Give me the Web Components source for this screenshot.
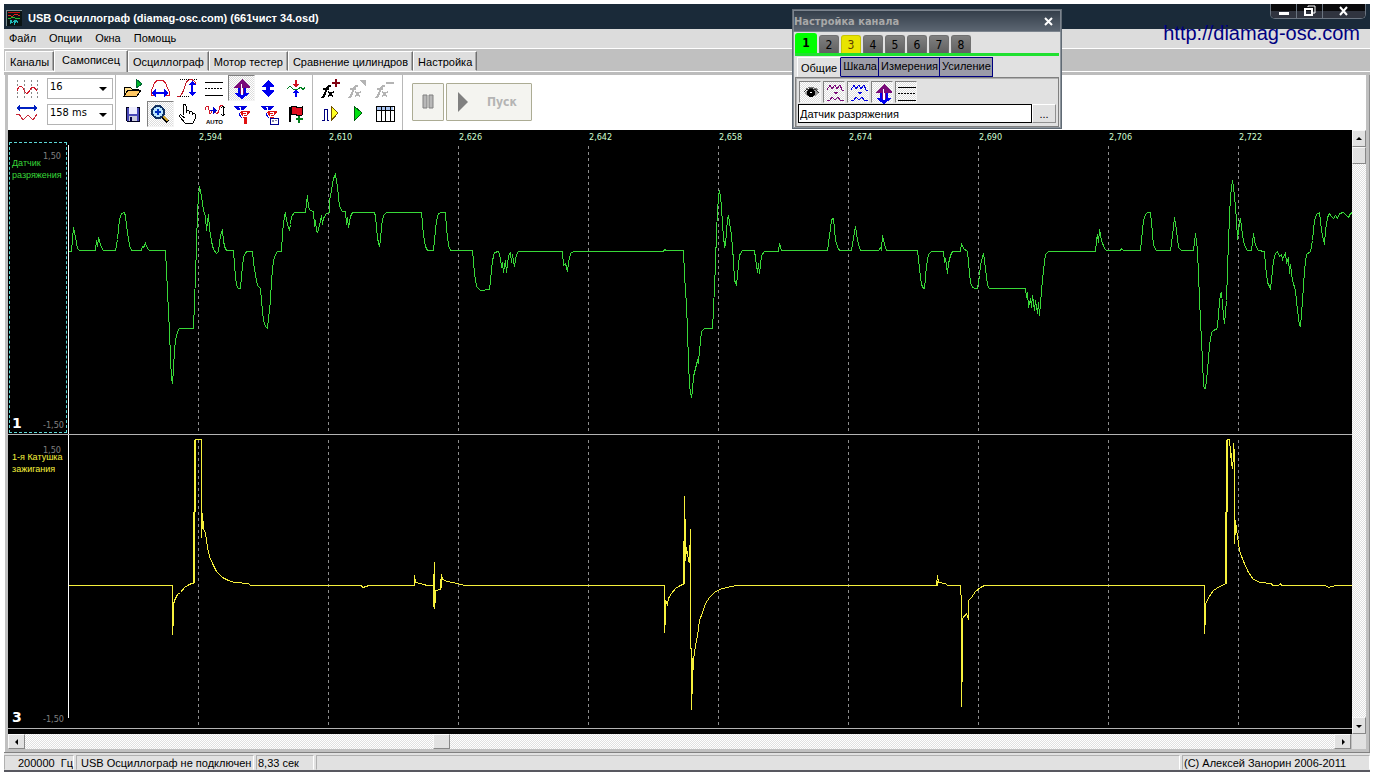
<!DOCTYPE html>
<html lang="ru">
<head>
<meta charset="utf-8">
<title>USB Осциллограф</title>
<style>
  html, body { margin: 0; background: #fff; }
  body { font: 11px/14px "Liberation Sans", Arial, sans-serif; color: #000; }
</style>
</head>
<body>
<osc-app></osc-app>
<script>
const define = (name, render, after) => customElements.define(name, class extends HTMLElement {
  connectedCallback() {
    if (this.shadowRoot) return;
    const root = this.attachShadow({ mode: 'open' });
    const t = document.createElement('template');
    t.innerHTML = '<style>*{box-sizing:border-box}button,input,select{font:inherit;color:inherit;margin:0;padding:0;border:0;border-radius:0}:host{box-sizing:border-box}</style>' + render(this);
    root.append(t.content.cloneNode(true));
    if (after) after(this, root);
  }
});

/* Icons, drawn on a 27 x 26 cell. */
const FX = (c) => `<g stroke="${c}" fill="none" stroke-width="2"><path d="M14 11c-2-1-3 0-4 2l-3 8c0 1-1 2-2 1M6 14h6"/><path stroke-width="1.6" d="M11 17c3-1 2 5 5 4M17 17c-2-1-4 5-6 4"/></g>`;
const ARROWS = `<path fill="#7a0a7a" d="M14 4l8 8v1h-5v6h-2v-6h-2v6h-2v-6H6v-1z"/><path fill="#fff" d="M13 9h1v9h-1z"/><path fill="#0000f0" d="M10 13h2v6h4v-6h2v5h3v1l-7 5-7-5v-1h3z"/><path fill="#fff" d="M13 13h2v7h-2z"/><path fill="#7a0a7a" d="M12 12h1v5h-1zM15 12h1v5h-1z"/>`;
const FILTERS = `<path fill="#0000e0" d="M5 5h14l-5 6v6l-3-2v-4z"/><path fill="#e01010" stroke="#fff" d="M10 9h14l-5 7v7h-4v-6z"/><g fill="#fff"><path d="M11 6h2v5h-1V7h-1z"/><path d="M15 11h4v3h-3v1h3v1h-4v-3h3v-1h-3z"/></g>`;
const ICONS = {
  open: '<path d="M16 4v9l6-4z" fill="#00b828" stroke="#063"/><path d="M4 21V12h6l2 2h6v3" fill="#ffe08c" stroke="#000"/><path d="M4 21l4-6h13l-4 6z" fill="#ffc864" stroke="#000"/>',
  save: '<path d="M6 6h13v14H7l-1-1z" fill="#4a4ab8" stroke="#000020"/><path d="M9 6h8v7H9z" fill="#eef"/><path d="M9 15h8v5H9z" fill="#ccd"/><path d="M10 16h2v4h-2z" fill="#004"/>',
  dome: '<path d="M7 20H4v-4c1-2 1-3 2-4 1-5 4-7 7-7s6 2 7 7c1 1 1 2 2 4v4h-3" fill="none" stroke="#d01828"/><path d="M4 18l5-4v3h8v-3l5 4-5 4v-3H9v3z" fill="#0000f0"/>',
  range: '<path d="M6 4h17M6 21h10" stroke="#000" stroke-dasharray="1 1"/><path d="M3 21h3c5-3 4-15 9-16 4-1 6 1 7 4" fill="none" stroke="#c01828"/><path d="M18 6l4 4h-3v7h3l-4 4-4-4h3v-7h-3z" fill="#0000f0"/>',
  lines: '<path d="M4 7h18M4 20h18" stroke="#000"/><path d="M4 13h18" stroke="#000" stroke-dasharray="2 1"/>',
  both: ARROWS,
  updown: '<path d="M13 5l6 6v1h-4v3h4v1l-6 6-6-6v-1h4v-3H7v-1z" fill="#0000f0"/>',
  cross: '<path d="M5 14l3-3 3 3h5l3-2 2 3 2-3" fill="none" stroke="#008020"/><path d="M14 5v6" stroke="#d01020" stroke-width="2"/><path d="M10 9h7l-3 4z" fill="#d01020"/><path d="M10 18h7l-3-4z" fill="#0000f0"/><path d="M14 16v6" stroke="#0000f0" stroke-width="2"/>',
  zoom: '<path d="M15 15l6 6" stroke="#000" stroke-width="4"/><path d="M16 15l5 5" stroke="#c8a030" stroke-width="2"/><circle cx="11" cy="11" r="6" fill="#b8e4ff" stroke="#103060" stroke-width="2"/><path d="M8 11h6M11 8v6" stroke="#0030c0" stroke-width="2"/>',
  hand: '<path d="M9 14V5c1-2 2-2 3 0v7-2c1-1 3-1 3 0v3-2c1-1 3-1 3 0v3-1c1-1 3-1 3 0v5l-2 4h-8l-5-6c-1-2 1-3 2-1l3 2" fill="#fff" stroke="#000"/>',
  auto: '<path d="M4 9c1-5 4-5 4 0s2 4 3 1M14 9c1 5 3 4 4 0s1-5 4-5" fill="none" stroke="#d01828"/><path d="M9 9h3V6l4 3-4 4v-3H9z" fill="#0000d0"/><path d="M22 5v10M20 7l2-2 2 2M20 13l2 2 2-2" fill="none" stroke="#000"/><text x="5" y="23" font-size="6" font-weight="bold">AUTO</text>',
  filter: FILTERS,
  filterbox: FILTERS + '<path d="M15 17h8v6h-8z" fill="#fff" stroke="#000090"/><path d="M17 19h2v2h-2zM20 19h2v1h-2z" fill="#88a"/>',
  flag: '<path d="M8 6v15" stroke="#000" stroke-width="2"/><path d="M9 6l4-1 3 2 4-1v8l-4 1-3-2-4 1z" fill="#e01020" stroke="#000"/><path d="M17 15v7M14 18h7" stroke="#00801c" stroke-width="2"/>',
  fxadd: FX('#000') + '<path d="M19 4v8M15 8h8" stroke="#800010" stroke-width="2"/>',
  fxedit: FX('#b4b4b4') + '<path d="M15 5h7v7z" fill="#b4b4b4"/>',
  fxdel: FX('#b4b4b4') + '<path d="M15 8h8" stroke="#b4b4b4" stroke-width="2"/>',
  step: '<path d="M5 19h2V8h3v11h2" fill="none" stroke="#000080"/><path d="M14 5v15l7-8z" fill="#ffff20" stroke="#705000"/>',
  run: '<path d="M10 5v15l8-8z" fill="#00e010" stroke="#005c10"/>',
  table: '<path d="M5 5h18v15H5z" fill="#fff" stroke="#000"/><path d="M6 6h16v3H6z" fill="#a8c4f0"/><path d="M5 9h18M10 5v15M14 5v15M19 5v15" stroke="#000"/>',
  eye: '<path d="M6 13c3-5 11-6 15 0-3 5-11 5-15 0z" fill="#999"/><path d="M6 12c3-4 11-5 15 1" fill="none" stroke="#333"/><circle cx="13" cy="13" r="4" fill="#000"/><path d="M8 9c3-2 9-2 12 1" fill="none" stroke="#777"/><path d="M12 12h2" stroke="#fff"/>',
  wavesp: '<g fill="none" stroke="#7a0a7a"><path d="M5 10l3-5 2 4 3-4 2 4 3-4 2 5h2M5 20h3l2-3 3 3 3-3 2 3h4"/></g><path d="M11 12h5l-2 3z" fill="#7a0a7a"/>',
  wavesb: '<g fill="none" stroke="#0000e0"><path d="M5 10l3-5 2 4 3-4 2 4 3-4 2 5h2M5 20h3l2-3 3 3 3-3 2 3h4"/></g><path d="M11 12h5l-2 3z" fill="#0000e0"/>',
  grid: '<path d="M3 5h1v2h-1zM3 9h1v2h-1zM3 13h1v2h-1zM3 17h1v2h-1zM3 21h1v2h-1z" fill="#888"/><path d="M10 5v18M17 5v18M23 5v18" stroke="#888" stroke-dasharray="2 2"/><path d="M3 16c2-6 5-6 7-1s4 4 6 0 4-4 7 1" fill="none" stroke="#d01828"/>',
  span: '<path d="M2 7l4-3v2h14V4l4 3-4 3V8H6v2z" fill="#0020c0"/><path d="M2 13h3l4 6 5-5 5 5 4-6" fill="none" stroke="#c82838"/>'
};

define('osc-icon', el => `<style>
  :host{display:block;width:27px;height:26px;font-family:"Liberation Sans",sans-serif}
  svg{display:block}
</style><svg width="27" height="26" viewBox="0 0 27 26" aria-hidden="true" shape-rendering="crispEdges">${ICONS[el.getAttribute('name')]}</svg>`);

define('icon-button', el => `<style>
  :host{display:block}
  button{display:grid;place-items:center;width:27px;height:26px;background:none;border:1px solid transparent}
  :host([pressed]) button{background:repeating-conic-gradient(#dcdcdc 0 25%,#fff 0 50%) 0 0/2px 2px;border-color:#808080 #f4f4f4 #f4f4f4 #808080}
  :host([small]) button{width:22px;height:22px}
  osc-icon{margin:-2px}
</style><button type="button" aria-label="${el.getAttribute('label')}"><osc-icon name="${el.getAttribute('name')}"></osc-icon></button>`);

define('title-bar', () => `<style>
  :host{display:flex;height:25px;background:#1a2a39;color:#fff;font-weight:bold;padding-left:2px;gap:6px;align-items:center}
  h1{font:inherit;margin:0;flex:1;padding-top:3px;white-space:nowrap}
  .logo{margin-top:2px}
  .win{display:flex;align-self:flex-start;margin-right:4px;border:1px solid #6a7480;border-top:0;border-radius:0 0 5px 5px;background:#0c0f14}
  .win button{height:14px;width:26px;background:linear-gradient(#0a0a0c 50%,#30343f 50%);border-right:1px solid #6a7480;display:grid;place-items:center}
  .win button:first-child{border-bottom-left-radius:4px}
  .win button:last-child{width:42px;border-right:0;border-bottom-right-radius:4px}
  svg{display:block}
</style>
<svg class="logo" width="16" height="16" viewBox="0 0 16 16" shape-rendering="crispEdges" aria-hidden="true"><path d="M0 0h16v16H0z" fill="#0a1414" stroke="#7a8c90"/><path d="M2 3l3-1 3 1 6-1" stroke="#c01010" fill="none"/><path d="M2 6c2-3 3 2 5 0s3-2 7 0" stroke="#e02020" fill="none"/><path d="M2 8h3l2-1 2 1h5" stroke="#20c030" fill="none"/><path d="M4 14l1-4 1 3 2-2v4l2-5 2 3" stroke="#20b8b8" fill="none"/></svg>
<h1>USB Осциллограф (diamag-osc.com) (661чист 34.osd)</h1>
<div class="win">
 <button type="button" aria-label="Свернуть"><svg width="12" height="12" viewBox="0 0 12 12"><path d="M1 7h10v3H1z" fill="#fff"/></svg></button>
 <button type="button" aria-label="Восстановить"><svg width="12" height="12" viewBox="0 0 12 12" fill="none" stroke="#fff"><path d="M4 2V1h7v7H9"/><path stroke-width="2" d="M1 4h7v6H1z"/></svg></button>
 <button type="button" aria-label="Закрыть"><svg width="12" height="12" viewBox="0 0 12 12" stroke="#fff" stroke-width="2"><path d="M2 2l7 8M9 2l-7 8"/></svg></button>
</div>`);

define('menu-bar', () => `<style>
  :host{display:block;background:#dcdcdc;height:20px;border-bottom:1px solid #fff}
  nav{display:flex;gap:13px;padding:2px 0 0 5px}
  a{color:#000;text-decoration:none;line-height:15px}
</style><nav><a href="#file">Файл</a><a href="#options">Опции</a><a href="#windows">Окна</a><a href="#help">Помощь</a></nav>`);

define('tab-strip', el => `<style>
  :host{display:flex;background:#c0c0c0;height:26px;padding:1px 0 0 1px;border-bottom:3px solid #bcbcbc;position:relative}
  :host::after{content:"";position:absolute;left:0;right:0;bottom:0;height:1px;background:#fff}
  button{background:#dedede;border:1px solid;border-color:#fff #707070 transparent #fff;box-shadow:inset -1px 0 #a8a8a8;padding:2px 4px 0;margin-top:1px;height:20px;white-space:nowrap}
  button[aria-selected=true]{margin:0;height:22px;padding:0 7px 3px;z-index:1;border-bottom:0;background:#e2e2e2}
</style>${el.getAttribute('tabs').split('|').map((t, i) => `<button role="tab" type="button" aria-selected="${i === 1}">${t}</button>`).join('')}`);

define('combo-box', el => `<style>
  :host{display:block;position:relative;width:66px;height:21px}
  select{appearance:none;width:100%;height:100%;background:#fff;border:1px solid #b4b4b4;padding:0 18px 2px 2px;font-family:"DejaVu Sans Condensed",sans-serif}
  :host::after{content:"";position:absolute;right:6px;top:9px;border:4px solid transparent;border-top-color:#000;border-bottom:0;pointer-events:none}
</style><select aria-label="${el.getAttribute('label')}"><option>${el.getAttribute('value')}</option></select>`);

define('tool-bar', () => `<style>
  :host{display:flex;background:#fff;height:55px}
  .g{display:grid;grid-auto-rows:26px;border-right:1px solid #b8b8b8;align-content:start}
  .scale{grid-template-columns:33px 66px;width:108px;padding-left:6px;align-items:center}
  .tools{grid-template-columns:repeat(7,27px);width:197px;padding-left:4px}
  .calc{grid-template-columns:repeat(3,27px);width:90px;padding-left:4px}
  .run{display:flex;gap:2px;padding:8px 0 0 9px}
  .run button{height:38px;border:1px solid #acac94;border-radius:1px;background:#f4f4f0;color:#b4b4b4;display:flex;align-items:center}
  .pause{width:32px;justify-content:center}
  .run .start{width:86px;padding-left:10px;gap:18px;font:bold 12px/16px "DejaVu Sans Condensed",sans-serif}
  svg{display:block}
</style>
<div class="g scale"><osc-icon name="grid"></osc-icon><combo-box label="Чувствительность" value="16"></combo-box><osc-icon name="span"></osc-icon><combo-box label="Развёртка" value="158 ms"></combo-box></div>
<div class="g tools">
${[['open','Открыть'],['dome','Ширина'],['range','Размах'],['lines','Линии'],['both','Смещение',1],['updown','Масштаб'],['cross','Уровень'],['save','Сохранить'],['zoom','Лупа',1],['hand','Прокрутка'],['auto','Авто'],['filter','Фильтр'],['filterbox','Параметры фильтра'],['flag','Метка']].map(([n,l,p]) => `<icon-button name="${n}" label="${l}"${p ? ' pressed' : ''}></icon-button>`).join('')}
</div>
<div class="g calc">
${[['fxadd','Добавить функцию'],['fxedit','Изменить функцию'],['fxdel','Удалить функцию'],['step','Шаг'],['run','Запуск'],['table','Таблица']].map(([n,l]) => `<icon-button name="${n}" label="${l}"></icon-button>`).join('')}
</div>
<div class="run">
 <button class="pause" type="button" disabled aria-label="Пауза"><svg width="12" height="16" viewBox="0 0 12 16"><path d="M1 1h4v13H1zM7 1h4v13H7z" fill="#b8b8b8" stroke="#808080"/></svg></button>
 <button class="start" type="button" disabled><svg width="12" height="20" viewBox="0 0 12 20"><path d="M1 0v20l10-10z" fill="#808080"/></svg><span>Пуск</span></button>
</div>`);

define('scroll-bar', el => {
  const v = el.hasAttribute('vertical');
  const arrow = d => `<svg width="8" height="8" viewBox="0 0 8 8" aria-hidden="true"><path d="${d}"/></svg>`;
  return `<style>
  :host{display:flex;background:repeating-conic-gradient(#e0e0e0 0 25%,#fff 0 50%) 0 0/2px 2px}
  :host([vertical]){flex-direction:column}
  button,i{flex:none;display:grid;place-items:center;width:${v ? 14 : 17}px;height:${v ? 17 : 15}px;background:#e1e1e1;border:1px solid;border-color:#f8f8f8 #888 #888 #f8f8f8}
  span{flex:${el.getAttribute('before')} 1 0px}
  span:last-of-type{flex-grow:${el.getAttribute('after')}}
  svg{display:block}
</style><button type="button" aria-label="Назад">${arrow(v ? 'M1 5h6L4 2z' : 'M5 1v6L2 4z')}</button><span></span><i></i><span></span><button type="button" aria-label="Вперёд">${arrow(v ? 'M1 3h6L4 6z' : 'M3 1v6l3-3z')}</button>`;
});

/* Polyline lists are kept in chart units: one unit per screen pixel of the recording. */
const GREEN = '68,251 71,251 73,227 75,237 77,248 79,250 95,250 96,240 97,246 98,237 99,241 101,247 103,250 115,250 117,239 119,219 121,213 124,212 125,216 127,232 129,245 131,250 141,250 142,246 143,247 145,243 147,248 149,250 165,250 166,270 167,291 168,312 169,330 170,358 171,378 172,383 173,368 174,350 175,340 177,331 179,328 193,328 194,302 195,275 196,246 197,210 199,186 201,196 203,210 205,216 206,230 207,222 208,214 209,228 211,241 213,249 216,253 218,251 220,235 222,229 223,241 225,249 227,250 233,250 234,265 236,285 238,288 240,288 241,275 243,257 245,252 247,251 252,251 253,262 255,275 257,285 260,288 261,300 263,320 265,326 267,328 268,318 270,300 271,280 273,260 275,254 277,251 281,251 282,232 284,215 285,213 286,220 289,230 290,224 291,216 294,212 305,212 306,203 307,195 308,207 310,210 313,211 314,226 315,220 316,231 317,232 319,225 321,215 322,224 323,218 326,213 329,212 329,200 331,190 333,178 335,174 337,186 339,206 342,211 345,211 346,224 347,217 348,227 350,216 352,212 374,212 375,216 377,238 379,246 380,240 381,225 383,215 386,212 421,212 423,235 425,246 427,250 433,250 434,240 436,220 438,213 441,212 445,212 446,228 448,245 450,250 472,250 474,273 476,286 480,290 489,289 490,280 492,260 494,252 498,251 500,258 501,267 502,262 503,272 505,260 506,272 508,255 510,252 511,262 512,254 514,266 516,254 518,251 562,251 563,265 565,263 567,271 568,262 570,253 573,251 663,251 664,249 666,250 683,250 684,275 686,305 687,330 688,362 689,385 691,397 692,390 693,376 695,368 697,360 698,362 699,350 701,331 704,328 712,328 713,310 714,285 715,265 716,230 718,195 719,190 721,205 722,225 724,246 725,244 727,218 728,215 731,235 733,260 734,280 736,284 737,275 739,255 742,250 754,250 755,258 757,272 758,263 759,273 761,255 764,251 778,251 779,243 781,250 783,250 827,250 829,235 831,220 832,218 833,218 835,240 838,249 840,250 851,250 853,238 855,226 857,240 860,250 878,250 880,247 881,249 882,235 884,244 886,250 888,250 917,250 919,268 921,284 923,288 924,288 926,265 928,254 931,251 943,251 944,262 945,258 947,273 948,263 950,255 952,251 960,251 961,243 963,248 967,251 968,262 970,282 972,287 975,288 977,288 979,275 980,265 982,256 983,253 985,268 987,285 989,288 1025,288 1026,297 1027,292 1028,307 1030,298 1031,307 1032,295 1034,310 1035,300 1037,313 1038,302 1039,315 1041,290 1043,270 1045,254 1048,251 1095,251 1096,240 1097,234 1098,242 1099,229 1101,240 1104,248 1106,250 1120,250 1121,248 1123,250 1140,250 1141,240 1143,220 1145,214 1147,212 1150,212 1151,222 1153,245 1156,250 1170,250 1172,235 1174,217 1176,230 1178,247 1181,250 1193,250 1195,233 1197,250 1198,275 1200,320 1202,360 1203,385 1204,388 1205,388 1207,370 1209,345 1211,332 1213,330 1217,328 1218,312 1220,293 1221,292 1223,315 1224,323 1226,300 1228,240 1230,195 1232,180 1234,195 1236,220 1237,239 1239,222 1240,218 1242,235 1244,245 1247,250 1251,250 1253,233 1255,245 1258,250 1264,251 1265,265 1267,282 1270,288 1271,280 1273,260 1275,253 1277,251 1279,256 1281,254 1282,259 1285,252 1286,262 1288,258 1289,273 1290,264 1292,280 1295,290 1297,310 1299,325 1300,326 1302,300 1304,270 1306,254 1310,251 1312,240 1314,220 1316,214 1319,212 1321,230 1324,244 1325,230 1327,217 1329,213 1331,216 1333,218 1335,215 1337,218 1339,213 1343,212 1346,215 1348,217 1350,213 1352,212';
const YELLOW = '68,585 172,585 172,634 173,618 173,604 174,600 177,594 180,592 184,587 187,585 191,583 194,582 194,511 195,511 195,439 201,439 201,537 202,513 203,528 205,533 207,547 209,556 212,563 216,571 222,577 228,580 234,582 248,583 250,585 361,585 362,587 366,586 368,585 414,585 414,575 415,582 424,584 426,585 433,585 434,562 434,608 435,597 435,590 440,589 441,585 441,574 442,579 447,581 457,583 464,585 664,585 664,632 665,618 665,600 667,604 668,598 671,593 675,588 680,585 684,583 684,540 684,496 685,540 685,558 686,547 688,560 689,562 690,529 690,648 691,648 691,709 692,680 693,659 695,645 697,635 699,620 702,612 705,603 709,597 714,592 719,589 726,587 736,585 936,585 937,575 938,582 945,583 947,585 960,585 961,603 961,706 962,660 962,618 966,613 968,619 968,600 971,597 975,591 980,587 984,585 1204,585 1204,633 1205,617 1205,604 1208,597 1213,590 1219,586 1226,583 1226,511 1227,511 1227,439 1229,439 1230,452 1231,463 1232,468 1233,455 1233,443 1234,453 1234,543 1235,520 1237,536 1239,550 1243,561 1248,572 1253,579 1260,582 1271,583 1272,585 1278,585 1280,583 1281,585 1325,585 1328,587 1335,585 1352,585';
const YELLOW_HEAVY = 'M193 583V511M194 511V439M172 618V604M202 513V528M683 583V540M685 538V560M686 547V553M692 657V682M937 580V585M962 618V660M968 600V614M1225 583V511M1226 511V439M1204 604V618M1235 520V534M1231 452V463M433 585V606M435 590V597M440 578V589';

define('channel-lane', el => {
  const green = el.getAttribute('number') === '1';
  const y = green ? 141 : 435;
  let grid = '';
  for (let x = 198; x < 1352; x += 130) grid += `M${x} ${y + 4}V${y + 294}`;
  return `<style>
  :host{display:grid;grid-template-columns:60px 1fr;border-bottom:1px solid #b4b4b4;min-height:0;color:${el.getAttribute('color')};font-family:"DejaVu Sans Condensed",sans-serif}
  .side{position:relative;font-size:9px;line-height:12px;border:1px dashed transparent;margin:1px;padding:14px 0 0 2px}
  :host([active]) .side{border-color:#5cd6d6}
  .name{white-space:pre-line;position:relative;font-family:"Liberation Sans",sans-serif}
  .max,.min{position:absolute;color:#808080}
  .max{right:5px;top:7px}.min{right:2px;bottom:1px}
  b{position:absolute;left:2px;bottom:2px;color:#fff;font:bold 14px/14px "DejaVu Sans",sans-serif}
  .plot{position:relative;border-left:1px solid #fff;margin-top:${green ? 4 : 0}px;margin-bottom:${green ? 0 : 10}px}
  svg{position:absolute;left:0;top:${green ? -4 : 0}px;width:100%;height:calc(100% + ${green ? 4 : 10}px)}
</style><div class="side"><div class="max">1,50</div><div class="name"><slot></slot></div><b>${el.getAttribute('number')}</b><div class="min">-1,50</div></div>
<div class="plot"><svg viewBox="69 ${y} 1283 293" preserveAspectRatio="none" fill="none" shape-rendering="crispEdges" aria-hidden="true"><g transform="translate(.5 .5)"><path d="${grid}" stroke="#8c8c8c" stroke-dasharray="3 3"/><polyline stroke="currentColor" points="${green ? GREEN : YELLOW}"/>${green ? '' : `<path stroke="currentColor" d="${YELLOW_HEAVY}"/>`}</g></svg></div>`;
});

define('signal-chart', () => `<style>
  :host{display:grid;grid-template-columns:1fr 14px 3px;grid-template-rows:1fr 15px 3px;background:#c0c0c0;min-height:300px;flex:1}
  .screen{background:#000;display:grid;grid-template-rows:11px 1fr 1fr 5px;min-width:0}
  .ruler{display:grid;grid-template-columns:129fr repeat(8,130fr) 114fr;margin-left:61px;color:#d0ffd0;font:9px/15px "DejaVu Sans Condensed",sans-serif}
  .ruler span{min-width:0;white-space:nowrap;padding-left:1px}
  .corner{background:#e1e1e1}
  .hs{margin-right:1px}
</style>
<div class="screen"><div class="ruler"><span></span>${['2,594','2,610','2,626','2,642','2,658','2,674','2,690','2,706','2,722'].map(t => `<span>${t}</span>`).join('')}</div>
<channel-lane number="1" color="#38d838" active>Датчик
разряжения</channel-lane>
<channel-lane number="3" color="#f6f03c">1-я Катушка
зажигания</channel-lane></div>
<scroll-bar vertical before="0" after="1"></scroll-bar><i></i>
<scroll-bar class="hs" before="408" after="884"></scroll-bar><div class="corner"></div>`);

define('status-bar', () => `<style>
  :host{display:flex;height:20px;background:#e1e1e1;border-top:1px solid #808080;border-bottom:2px solid #585860;padding-top:2px;gap:2px;white-space:nowrap}
  div{border:1px solid;border-color:#b0b0b0 #fff transparent #b0b0b0;line-height:15px;padding-left:1px}
  .rate{width:70px;text-align:right;white-space:pre}
  .dev{width:178px;padding-left:4px}
  .time{width:58px}
  .fill{flex:1}
  .copy{width:188px}
</style><div class="rate">200000  Гц</div><div class="dev">USB Осциллограф не подключен</div><div class="time">8,33 сек</div><div class="fill"></div><div class="copy">(С) Алексей Занорин 2006-2011</div>`);

define('channel-panel', () => `<style>
  :host{display:block;width:270px;background:#e1e1e1;border:1px solid #606a74;box-shadow:inset 0 0 0 1px #8c949c}
  header{display:flex;justify-content:space-between;align-items:center;height:22px;background:linear-gradient(#343e4a,#5c6672);color:#a8a8a8;border:1px solid #7c848e;padding:2px 4px 0 0;font-weight:bold;font-family:"DejaVu Sans Condensed",sans-serif}
  header button{width:14px;height:14px;background:none}
  header svg{display:block}
  .ch{display:flex;align-items:flex-end;gap:2px;margin:1px 2px 0;border-bottom:3px solid #20e030;height:23px;font:12px/14px "DejaVu Sans Condensed",sans-serif}
  .ch button{width:20px;height:18px;background:linear-gradient(#808080,#606060);border-radius:3px 3px 0 0;border:1px solid #707070;border-bottom:0}
  .ch .a{width:22px;height:20px;background:#00ff00;border-color:#00ff00;font-weight:bold;padding-bottom:2px}
  .ch .c{background:#e8e400;border-color:#c8c400;color:#604000}
  .sub{display:flex;margin:1px 2px 0 4px;align-items:flex-start}
  .sub button{height:20px;border:1px solid #000080;border-left:0;background:#9c9ca8;padding:0 1px 2px 2px}
  .sub .a{border:1px solid;border-color:#fff #000080 transparent #fff;background:#e1e1e1;padding:2px 3px 0}
  .page{border:1px solid #808080;box-shadow:inset 1px 1px #b0b0b0;margin:0 2px 1px;padding:3px 2px 1px;height:50px}
  .tools{display:flex;gap:2px;padding-left:1px}
  .name{display:flex;padding-top:1px}
  input{flex:1;min-width:0;height:19px;background:#fff;border:1px solid #000;padding:0 0 0 1px}
  .more{width:24px;height:19px;background:#e1e1e1;border:1px solid;border-color:#fff #909090 #909090 #fff}
</style>
<header>Настройка канала<button type="button" aria-label="Закрыть"><svg width="14" height="14" viewBox="0 0 14 14" stroke="#fff" stroke-width="2"><path d="M3 3l7 7M10 3l-7 7"/></svg></button></header>
<div class="ch">${[1,2,3,4,5,6,7,8].map(n => `<button type="button" class="${n === 1 ? 'a' : n === 3 ? 'c' : ''}">${n}</button>`).join('')}</div>
<div class="sub"><button type="button" class="a">Общие</button><button type="button">Шкала</button><button type="button">Измерения</button><button type="button">Усиление</button></div>
<div class="page"><div class="tools">${[['eye','Видимость'],['wavesp','Фильтр'],['wavesb','Сглаживание'],['both','Смещение'],['lines','Линии']].map(([n,l]) => `<icon-button small pressed name="${n}" label="${l}"></icon-button>`).join('')}</div>
<div class="name"><input aria-label="Имя канала" value="Датчик разряжения"><button class="more" type="button" aria-label="Ещё">...</button></div></div>`);

define('osc-app', () => `<style>
  :host{display:flex;flex-direction:column;position:relative;margin:0 4px;padding:4px 0;min-height:100vh}
  tool-bar,signal-chart{border-left:3px solid #c0c0c0;margin-left:1px}
  tool-bar{border-right:3px solid #c0c0c0}
  .frame{display:flex;flex-direction:column;flex:1;border-right:1px solid #909090}
  .site{position:absolute;right:10px;top:22px;color:#000080;text-decoration:none;font:20px/22px "Liberation Sans",sans-serif}
  channel-panel{position:absolute;right:308px;top:9px}
</style>
<title-bar></title-bar><menu-bar></menu-bar>
<tab-strip role="tablist" tabs="Каналы|Самописец|Осциллограф|Мотор тестер|Сравнение цилиндров|Настройка"></tab-strip>
<div class="frame"><tool-bar></tool-bar><signal-chart></signal-chart></div>
<status-bar></status-bar>
<a class="site" href="http://diamag-osc.com">http://diamag-osc.com</a>
<channel-panel></channel-panel>`);
</script>
</body>
</html>
